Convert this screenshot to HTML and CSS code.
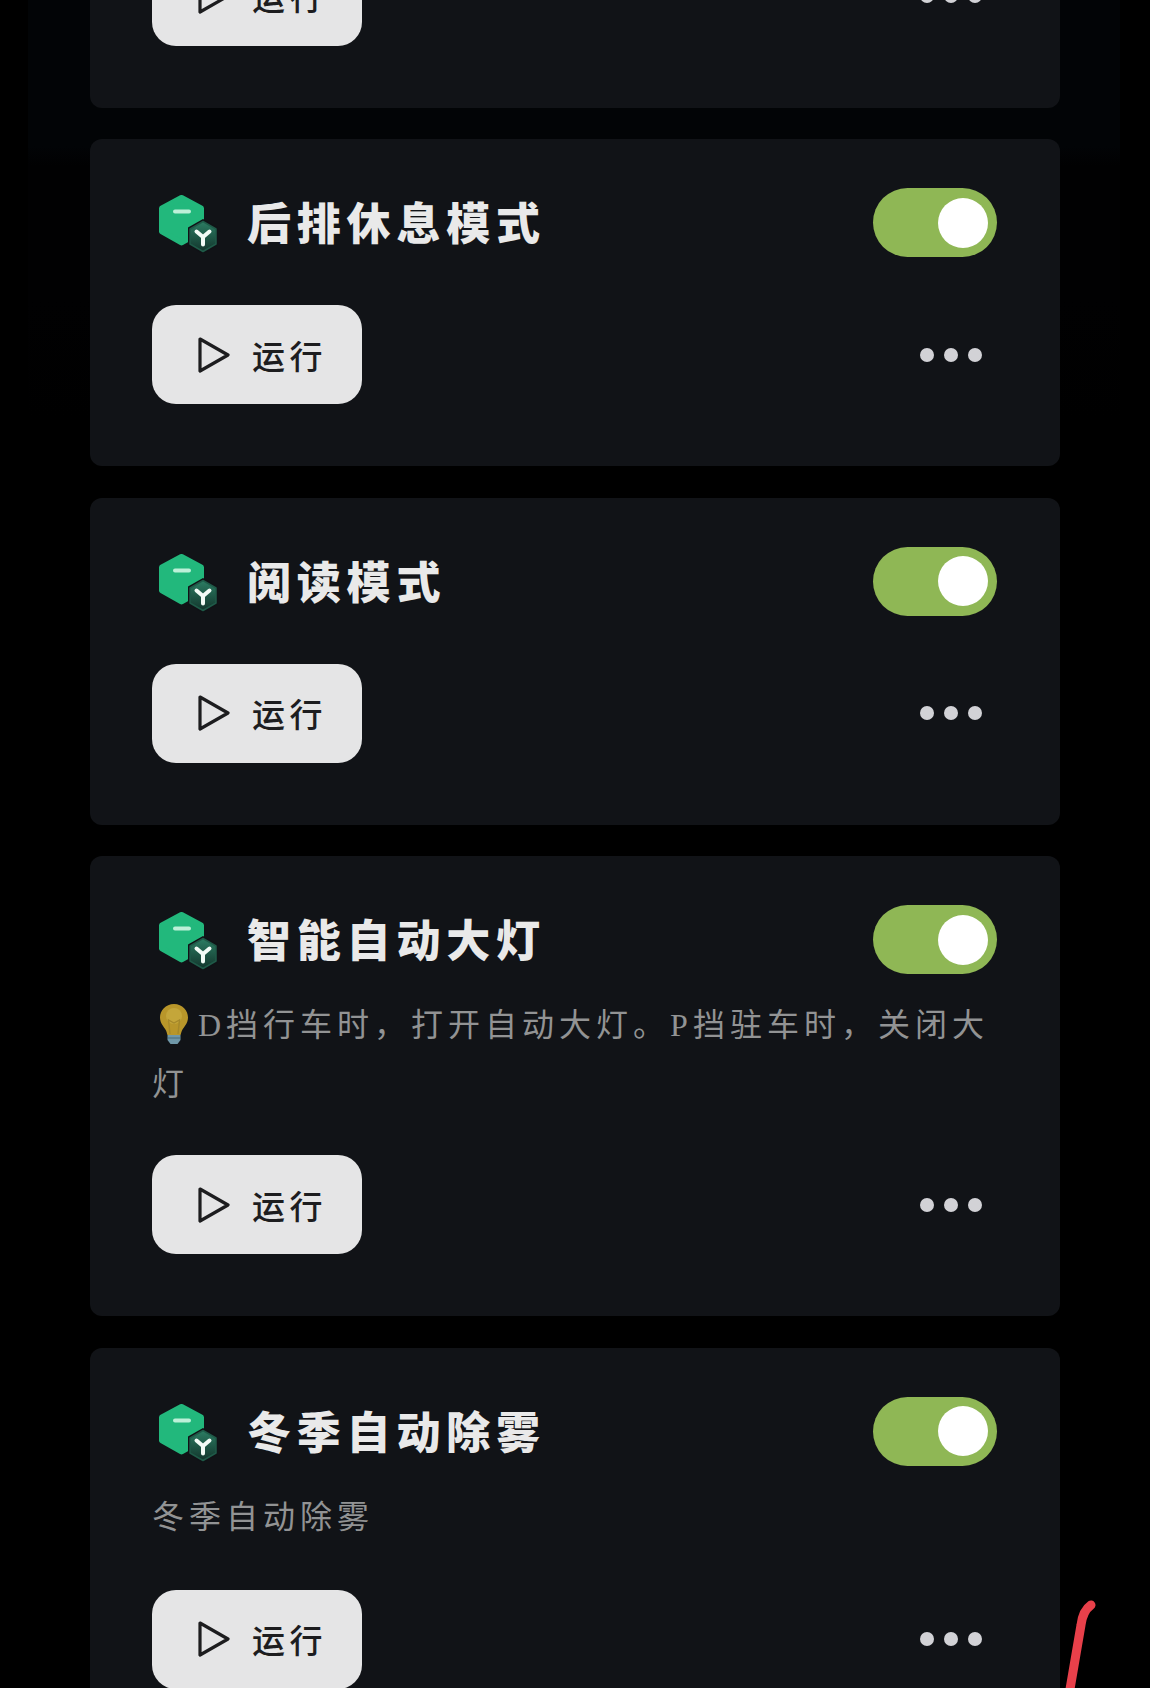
FILE: index.html
```html
<!DOCTYPE html>
<html lang="zh-CN">
<head>
<meta charset="utf-8">
<title>场景模式</title>
<link rel="stylesheet" href="styles.css">
</head>
<body>
<svg class="defs" width="0" height="0" aria-hidden="true">
  <defs>
    <linearGradient id="smallHex" x1="0" y1="0" x2="0" y2="1">
      <stop offset="0" stop-color="#2c7d63"/>
      <stop offset="1" stop-color="#12352c"/>
    </linearGradient>
    <symbol id="cube" viewBox="0 0 60 58">
      <path d="M23.5 3 L43 13.5 V36.5 L23.5 47.5 L4 36.5 V13.5 Z" fill="#22b87c" stroke="#22b87c" stroke-width="6" stroke-linejoin="round"/>
      <path d="M17 16.5 H31" stroke="#bdf0d8" stroke-width="4" stroke-linecap="round"/>
      <path d="M45 24 L60 32.5 V50.5 L45 59 L30 50.5 V32.5 Z" fill="#101216"/>
      <path d="M45 26.5 L58 34 V49 L45 56.5 L32 49 V34 Z" fill="url(#smallHex)" stroke="#1f5a48" stroke-width="1.5" stroke-linejoin="round"/>
      <path d="M38.5 36.5 L45 42 L51.5 36.5 M45 42 V49.5" fill="none" stroke="#f2fbf6" stroke-width="4" stroke-linecap="round" stroke-linejoin="round"/>
    </symbol>
    <symbol id="play" viewBox="0 0 32 36">
      <path d="M2 2 L30 18 L2 34 Z" fill="none" stroke="#1d1d1f" stroke-width="3.2" stroke-linejoin="round"/>
    </symbol>
  </defs>
</svg>

<div class="screen">
  <main class="list">
    <section class="card">
      <div class="head">
        <svg class="cube"><use href="#cube"/></svg>
        <h2 class="title">场景模式</h2>
        <div class="switch"><span class="knob"></span></div>
      </div>
      <div class="foot">
        <button class="run"><svg class="play"><use href="#play"/></svg><span>运行</span></button>
        <div class="more"><i></i><i></i><i></i></div>
      </div>
    </section>

    <section class="card">
      <div class="head">
        <svg class="cube"><use href="#cube"/></svg>
        <h2 class="title">后排休息模式</h2>
        <div class="switch"><span class="knob"></span></div>
      </div>
      <div class="foot">
        <button class="run"><svg class="play"><use href="#play"/></svg><span>运行</span></button>
        <div class="more"><i></i><i></i><i></i></div>
      </div>
    </section>

    <section class="card">
      <div class="head">
        <svg class="cube"><use href="#cube"/></svg>
        <h2 class="title">阅读模式</h2>
        <div class="switch"><span class="knob"></span></div>
      </div>
      <div class="foot">
        <button class="run"><svg class="play"><use href="#play"/></svg><span>运行</span></button>
        <div class="more"><i></i><i></i><i></i></div>
      </div>
    </section>

    <section class="card">
      <div class="head">
        <svg class="cube"><use href="#cube"/></svg>
        <h2 class="title">智能自动大灯</h2>
        <div class="switch"><span class="knob"></span></div>
      </div>
      <p class="desc"><svg class="bulb" viewBox="0 0 30 42" aria-hidden="true">
          <path d="M15 1 C6.5 1 1 7.5 1 14.5 C1 20.5 5 23.5 7 27.5 C8 29.5 8 31 8.5 32 H21.5 C22 31 22 29.5 23 27.5 C25 23.5 29 20.5 29 14.5 C29 7.5 23.5 1 15 1 Z" fill="#b8962a"/>
          <ellipse cx="15" cy="13" rx="8" ry="8" fill="#c4a63a"/>
          <path d="M11 31 L9.5 17 L15 20 L20.5 17 L19 31" fill="none" stroke="#a5882a" stroke-width="1.4"/>
          <path d="M8.5 32 H21.5 V37 L18.5 41 H11.5 L8.5 37 Z" fill="#6f97a8"/>
          <path d="M9 35 H21" stroke="#557889" stroke-width="1.5"/>
        </svg>D挡行车时，打开自动大灯。P挡驻车时，关闭大灯</p>
      <div class="foot">
        <button class="run"><svg class="play"><use href="#play"/></svg><span>运行</span></button>
        <div class="more"><i></i><i></i><i></i></div>
      </div>
    </section>

    <section class="card">
      <div class="head">
        <svg class="cube"><use href="#cube"/></svg>
        <h2 class="title">冬季自动除雾</h2>
        <div class="switch"><span class="knob"></span></div>
      </div>
      <p class="desc">冬季自动除雾</p>
      <div class="foot">
        <button class="run"><svg class="play"><use href="#play"/></svg><span>运行</span></button>
        <div class="more"><i></i><i></i><i></i></div>
      </div>
    </section>
  </main>

  <svg class="mark" viewBox="0 0 40 100" aria-hidden="true">
    <path d="M31 10 C24 15 22 22 21 30 L9 100" fill="none" stroke="#e8404a" stroke-width="9" stroke-linecap="round"/>
  </svg>
</div>
</body>
</html>
```

FILE: styles.css
```css
* { box-sizing: border-box; }

html, body {
  margin: 0;
  height: 1688px;
  overflow: hidden;
  background: #000;
}

body {
  font-family: "Liberation Serif", "Noto Sans CJK SC", sans-serif;
}

.defs { position: absolute; }

.screen {
  position: relative;
  height: 1688px;
  overflow: hidden;
}

.list {
  display: flex;
  flex-direction: column;
  gap: 31.5px;
  margin: -219.5px 30px 0 28px;
  padding: 0 60px 0 62px;
  background: linear-gradient(#020406 0, #020406 365px, #010102 385px, #010102 520px, #000 640px);
  height: 2000px;
}

.card {
  background: #111317;
  border-radius: 12px;
  padding: 49px 63px 62px 62px;
}

.head {
  display: flex;
  align-items: center;
  height: 69px;
}

.cube {
  width: 60px;
  height: 58px;
  margin-left: 6px;
  margin-top: 3px;
  flex: none;
}

.title {
  margin: -3px 0 0 29px;
  flex: 1;
  font-size: 44px;
  font-weight: 900;
  letter-spacing: 5.8px;
  line-height: 60px;
  color: #e9e9e9;
  font-family: "Noto Sans CJK SC", sans-serif;
}

.switch {
  display: flex;
  align-items: center;
  justify-content: flex-end;
  width: 124px;
  height: 69px;
  padding-right: 9px;
  border-radius: 35px;
  background: #8fb755;
  flex: none;
}

.knob {
  width: 50px;
  height: 50px;
  border-radius: 50%;
  background: #fff;
}

.desc {
  margin: 22px 0 41px;
  font-size: 32px;
  line-height: 59px;
  letter-spacing: 5px;
  color: #929394;
}

.card:last-child .desc { margin-bottom: 43px; }

.bulb {
  width: 30px;
  height: 42px;
  margin: 0 9px 0 7px;
  vertical-align: -9px;
}

.foot {
  display: flex;
  align-items: center;
  justify-content: space-between;
}

.head + .foot { margin-top: 48px; }

.run {
  display: flex;
  align-items: center;
  gap: 22px;
  width: 210px;
  height: 99px;
  padding: 0 0 0 46px;
  border: 0;
  border-radius: 24px;
  background: #e5e5e6;
  color: #1d1d1f;
  font-family: "Noto Sans CJK SC", sans-serif;
  font-size: 33px;
  font-weight: 500;
  letter-spacing: 4.5px;
}

.play {
  width: 32px;
  height: 36px;
  flex: none;
}

.more {
  display: flex;
  gap: 10px;
  margin-right: 15px;
}

.more i {
  width: 14px;
  height: 14px;
  border-radius: 50%;
  background: #d2d2d6;
}

.mark {
  position: absolute;
  left: 1060px;
  top: 1595px;
  width: 40px;
  height: 100px;
}
```
